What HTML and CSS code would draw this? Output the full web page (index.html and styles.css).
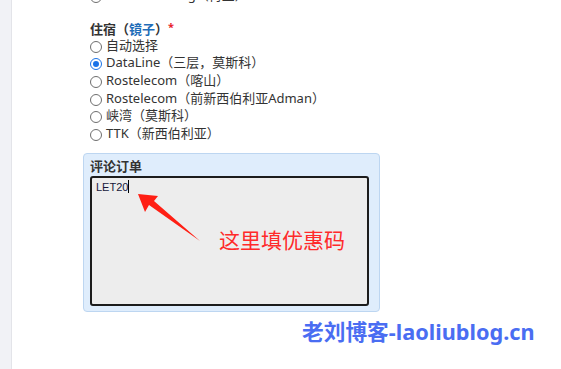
FILE: index.html
```html
<!DOCTYPE html>
<html lang="zh">
<head>
<meta charset="utf-8">
<link rel="stylesheet" href="styles.css">
</head>
<body>
<div class="page">
  <div class="side"></div>
  <div class="main">
    <div class="opt prev"><span class="radio"></span>Stellar Hosting（荷兰）</div>
    <div class="group">
      <div class="label">住宿（<a class="link">镜子</a>）<span class="req">*</span></div>
      <div class="opt"><span class="radio"></span>自动选择</div>
      <div class="opt"><span class="radio on"></span>DataLine（三层，莫斯科）</div>
      <div class="opt"><span class="radio"></span>Rostelecom（喀山）</div>
      <div class="opt"><span class="radio"></span>Rostelecom（前新西伯利亚Adman）</div>
      <div class="opt"><span class="radio"></span>峡湾（莫斯科）</div>
      <div class="opt"><span class="radio"></span>TTK（新西伯利亚）</div>
    </div>
    <div class="box">
      <div class="boxlabel">评论订单</div>
      <div class="area">LET20<span class="caret"></span></div>
    </div>
  </div>
</div>
<svg class="arrow" width="561" height="369" viewBox="0 0 561 369">
  <polygon points="138,194 158,196 154,201 200,241 149,205 145,212" fill="#ff1f14"/>
</svg>
<div class="note">这里填优惠码</div>
<div class="mark">老刘博客-laoliublog.cn</div>
</body>
</html>
```
FILE: styles.css
```css
html, body {
  margin: 0;
  padding: 0;
  background: #ffffff;
  width: 561px;
  height: 369px;
  overflow: hidden;
  font-family: "Noto Sans", "Noto Sans CJK SC", sans-serif;
  font-size: 13px;
  color: #333333;
}
.page {
  display: flex;
  height: 369px;
  position: relative;
}
.side {
  width: 11px;
  flex: none;
  background: #f1f2f6;
  border-right: 1px solid #e3e4e9;
}
.main {
  margin-left: 71px;
  display: flex;
  flex-direction: column;
}
.opt {
  display: flex;
  align-items: center;
  height: 17.7px;
  line-height: 17.7px;
  padding-left: 7px;
  white-space: nowrap;
}
.prev {
  margin-top: -13px;
}
.group {
  margin-top: 13px;
}
.label {
  padding-left: 7px;
  font-weight: bold;
  line-height: 18px;
  height: 18px;
  margin-bottom: 1px;
  color: #333;
}
.link {
  color: #1f6db8;
}
.req {
  color: #e8202a;
  font-size: 11px;
  vertical-align: 3px;
}
.radio {
  width: 10px;
  height: 10px;
  border: 1px solid #6e6e6e;
  border-radius: 50%;
  margin-right: 4px;
  box-sizing: content-box;
  flex: none;
  position: relative;
  top: 1px;
}
.radio.on {
  border-color: #1a73e8;
}
.radio.on::after {
  content: "";
  position: absolute;
  left: 2px;
  top: 2px;
  width: 6px;
  height: 6px;
  border-radius: 50%;
  background: #1a73e8;
}
.box {
  margin-top: 10px;
  width: 279px;
  background: #dfedfc;
  border: 1px solid #bdd6f1;
  border-radius: 4px;
  padding: 4px 10px 5px 6px;
}
.boxlabel {
  font-weight: bold;
  line-height: 16px;
  height: 16px;
  margin-bottom: 2px;
  color: #333;
}
.area {
  height: 122px;
  background: #ededed;
  border: 2px solid #1c1c1c;
  border-radius: 3px;
  font-family: "Liberation Sans", Arial, sans-serif;
  font-size: 11px;
  color: #16163a;
  padding: 2px 4px;
  line-height: 12px;
  box-sizing: content-box;
  width: 267px;
}
.caret {
  display: inline-block;
  width: 1px;
  height: 13px;
  background: #000;
  vertical-align: -2px;
}
.arrow {
  position: absolute;
  left: 0;
  top: 0;
}
.note {
  position: absolute;
  left: 219px;
  top: 225px;
  font-family: "Noto Sans CJK SC", sans-serif;
  font-size: 21px;
  line-height: 28px;
  color: #ff2a2a;
}
.mark {
  position: absolute;
  left: 302px;
  top: 316px;
  font-family: "Noto Sans", "Noto Sans CJK SC", sans-serif;
  font-weight: bold;
  font-size: 21.7px;
  line-height: 32px;
  color: #4a6df2;
  white-space: nowrap;
}
```
